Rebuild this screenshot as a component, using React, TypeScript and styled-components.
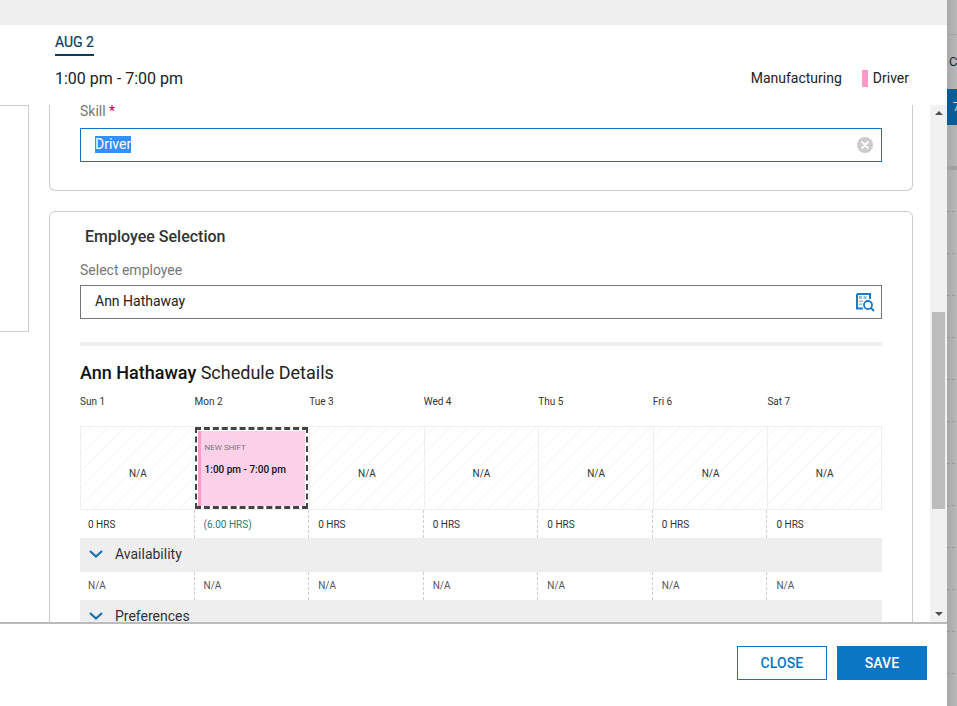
import React from "react";
import styled, { createGlobalStyle } from "styled-components";

const Global = createGlobalStyle`
  html, body { margin: 0; padding: 0; background: #fff; }
  body { font-family: Roboto, "Liberation Sans", sans-serif; }
`;

const Page = styled.div`
  width: 957px;
  height: 706px;
  display: flex;
  overflow: hidden;
`;
const Modal = styled.div`
  width: 947px;
  height: 706px;
  display: flex;
  flex-direction: column;
  background: #fff;
  flex: none;
`;
const TopBar = styled.div`
  height: 25px;
  background: #efefef;
  flex: none;
`;
const Header = styled.header`
  height: 80px;
  flex: none;
  padding: 9px 38px 0 55px;
  box-sizing: border-box;
`;
const DateTab = styled.div`
  display: table;
  font-size: 14px;
  line-height: 17px;
  font-weight: 400;
  color: #0d3c61;
  padding-bottom: 3px;
  border-bottom: 2px solid #0d3c61;
  -webkit-text-stroke: 0.2px #0d3c61;
`;
const TimeRow = styled.div`
  display: flex;
  align-items: center;
  justify-content: space-between;
  margin-top: 12px;
  height: 20px;
`;
const TimeText = styled.span`
  font-size: 16px;
  color: #222;
`;
const Legend = styled.div`
  display: flex;
  align-items: center;
  font-size: 14px;
  color: #222;
`;
const Swatch = styled.span`
  width: 6px;
  height: 17px;
  background: #ff99cc;
  margin: 0 5px 0 20px;
`;
const Body = styled.div`
  flex: 1;
  min-height: 0;
  display: flex;
  overflow: hidden;
`;
const SidePanel = styled.div`
  width: 29px;
  height: 227px;
  box-sizing: border-box;
  flex: none;
  border: 1px solid #ccc;
  border-left: none;
`;
const Main = styled.div`
  width: 864px;
  margin-left: 20px;
  margin-right: 17px;
  flex: none;
  display: flex;
  flex-direction: column;
  gap: 20px;
`;
const ClippedCard = styled.section`
  height: 86px;
  box-sizing: border-box;
  flex: none;
  border: 1px solid #ccc;
  border-top: none;
  border-radius: 0 0 6px 6px;
  padding: 0 30px;
`;
const Card = styled.section`
  flex: none;
  box-sizing: border-box;
  border: 1px solid #ccc;
  border-radius: 6px;
  padding: 15px 30px 0;
`;
const Label = styled.div`
  font-size: 14px;
  line-height: 16px;
  color: #777;
`;
const SkillLabel = styled(Label)`
  line-height: 12px;
  margin-bottom: 11px;
`;
const Required = styled.span`
  color: #c8004f;
`;
const Field = styled.div<{ $focus?: boolean }>`
  height: 34px;
  box-sizing: border-box;
  border: 1px solid ${(p) => (p.$focus ? "#0a76c4" : "#757575")};
  display: flex;
  align-items: center;
  justify-content: space-between;
  padding: 0 8px 0 14px;
  margin-top: 7px;
  font-size: 14px;
  color: #222;
`;
const FieldValue = styled.span`
  line-height: 17px;
  margin-bottom: 2px;
`;
const Selected = styled(FieldValue)`
  background: #3390ff;
  color: #fff;
`;
const SectionTitle = styled.h3`
  margin: 0 0 16px 5px;
  font-size: 16px;
  line-height: 19px;
  font-weight: 500;
  color: #333;
`;
const Divider = styled.div`
  height: 4px;
  background: #eee;
  margin-top: 23px;
`;
const ScheduleTitle = styled.h2`
  margin: 16px 0 0;
  font-size: 18px;
  line-height: 21px;
  font-weight: 400;
  color: #222;
  strong {
    font-weight: 500;
    color: #111;
  }
`;
const Week = styled.div`
  display: grid;
  grid-template-columns: repeat(7, 1fr);
  width: 802px;
`;
const DayNames = styled(Week)`
  margin-top: 13px;
  height: 30px;
`;
const DayName = styled.div`
  font-size: 10px;
  line-height: 12px;
  color: #333;
`;
const Slots = styled(Week)`
  height: 84px;
  box-sizing: border-box;
  border-top: 1px solid #eee;
  border-bottom: 1px solid #eee;
`;
const EmptySlot = styled.div`
  display: flex;
  align-items: center;
  justify-content: center;
  padding-top: 11px;
  font-size: 10px;
  color: #333;
  border-left: 1px solid #eee;
  background: repeating-linear-gradient(
    -45deg,
    #fff 0,
    #fff 11px,
    #f3f3f3 11px,
    #f3f3f3 12px
  );
  &:last-child {
    border-right: 1px solid #eee;
  }
`;
const ShiftSlot = styled.div`
  box-sizing: border-box;
  margin: 0 1px 0 0;
  border: 3px dashed #444;
  border-left-width: 2px;
  border-right-width: 2px;
  padding: 1px 1px 0 1px;
  background: #fff;
  display: flex;
`;
const ShiftFill = styled.div`
  flex: 1;
  background: #fbd0e9;
  border-left: 3px solid #ff99cc;
  padding: 12px 0 0 4px;
`;
const ShiftTag = styled.div`
  font-size: 8px;
  line-height: 10px;
  color: #777;
`;
const ShiftTime = styled.div`
  font-size: 10px;
  line-height: 12px;
  font-weight: 500;
  color: #111;
  margin-top: 11px;
`;
const InfoRow = styled(Week)<{ $h: number }>`
  height: ${(p) => p.$h}px;
`;
const InfoCell = styled.div<{ $accent?: boolean; $muted?: boolean }>`
  display: flex;
  align-items: center;
  padding-left: 9px;
  margin-left: -1px;
  padding-bottom: ${(p) => (p.$muted ? "2px" : "0")};
  font-size: 10px;
  color: ${(p) => (p.$accent ? "#2b7d6b" : p.$muted ? "#555" : "#333")};
  border-left: 1px dashed #ccc;
  &:first-child {
    border-left: none;
    margin-left: 0;
    padding-left: 8px;
  }
`;
const Band = styled.div`
  width: 802px;
  height: 34px;
  background: #eee;
  display: flex;
  align-items: center;
  padding-left: 9px;
  padding-bottom: 2px;
  box-sizing: border-box;
  font-size: 14px;
  color: #333;
  gap: 12px;
`;
const ScrollBar = styled.div`
  width: 17px;
  flex: none;
  background: #f1f1f1;
  display: flex;
  flex-direction: column;
  align-items: center;
  justify-content: space-between;
  position: relative;
`;
const Arrow = styled.div<{ $down?: boolean }>`
  width: 0;
  height: 0;
  margin: 6px 0;
  border-left: 4px solid transparent;
  border-right: 4px solid transparent;
  ${(p) =>
    p.$down ? "border-top: 4px solid #505050;" : "border-bottom: 4px solid #505050;"}
`;
const Thumb = styled.div`
  position: absolute;
  left: 2px;
  top: 207px;
  width: 13px;
  height: 197px;
  background: #bcbcbc;
`;
const Footer = styled.footer`
  height: 84px;
  flex: none;
  box-sizing: border-box;
  border-top: 2px solid #bbb;
  display: flex;
  justify-content: flex-end;
  gap: 10px;
  padding: 22px 20px 0 0;
`;
const Button = styled.button<{ $primary?: boolean }>`
  width: 90px;
  height: 34px;
  box-sizing: border-box;
  border: 1px solid #0a76c4;
  background: ${(p) => (p.$primary ? "#0a76c4" : "#fff")};
  color: ${(p) => (p.$primary ? "#fff" : "#0a76c4")};
  font-family: inherit;
  font-size: 14px;
  font-weight: 500;
  padding: 0;
  letter-spacing: 0.1px;
`;
const Strip = styled.aside`
  width: 10px;
  height: 706px;
  flex: none;
  background: linear-gradient(90deg, #a9a9a9, #b8b8b8);
  overflow: hidden;
  display: flex;
  flex-direction: column;
`;
const StripHead = styled.div`
  height: 35px;
  box-sizing: border-box;
  border-bottom: 1px solid #a4a4a4;
  flex: none;
`;
const StripCell = styled.div`
  height: 54px;
  flex: none;
  padding-left: 2px;
  font-size: 13px;
  line-height: 54px;
  color: #1a2a3a;
`;
const StripActive = styled.div`
  height: 36px;
  flex: none;
  background: #0a5c96;
  color: #cfe0ec;
  font-size: 12px;
  line-height: 36px;
  padding-left: 6px;
`;
const StripGap = styled.div`
  height: 45px;
  flex: none;
  box-sizing: border-box;
  border-bottom: 4px solid #a0a0a0;
`;
const TickRow = styled.div`
  height: 42px;
  flex: none;
  background: linear-gradient(
      90deg,
      #999 0 3px,
      transparent 3px 5px,
      #999 5px 8px,
      transparent 8px
    )
    0 41px / 100% 1px no-repeat;
`;

const ClearIcon = () => (
  <svg width="16" height="16" viewBox="0 0 16 16">
    <circle cx="8" cy="8" r="8" fill="#ccc" />
    <path d="M5 5l6 6M11 5l-6 6" stroke="#fff" strokeWidth="1.8" strokeLinecap="round" />
  </svg>
);

const LookupIcon = () => (
  <svg width="19" height="19" viewBox="0 0 19 19" style={{ marginRight: -2 }}>
    <path d="M1 1h13v5M1 1v14.5h6" fill="none" stroke="#1a7bc4" strokeWidth="2" />
    <rect x="3" y="3" width="3" height="3" fill="#8fc0e6" />
    <rect x="7.5" y="3" width="3" height="3" fill="#8fc0e6" />
    <rect x="3" y="7.5" width="4" height="1.5" fill="#8fc0e6" />
    <rect x="3" y="10.5" width="3" height="1.5" fill="#8fc0e6" />
    <circle cx="12" cy="12" r="4" fill="#fff" stroke="#1a7bc4" strokeWidth="1.8" />
    <path d="M15 15l3 3" stroke="#1a7bc4" strokeWidth="1.8" />
  </svg>
);

const Chevron = () => (
  <svg width="14" height="8" viewBox="0 0 14 8">
    <path d="M1 1l6 5.5L13 1" fill="none" stroke="#1a6fb0" strokeWidth="2.2" />
  </svg>
);

const days = ["Sun 1", "Mon 2", "Tue 3", "Wed 4", "Thu 5", "Fri 6", "Sat 7"];

export default function App() {
  return (
    <Page>
      <Global />
      <Modal>
        <TopBar />
        <Header>
          <DateTab>AUG 2</DateTab>
          <TimeRow>
            <TimeText>1:00 pm - 7:00 pm</TimeText>
            <Legend>
              Manufacturing
              <Swatch />
              Driver
            </Legend>
          </TimeRow>
        </Header>
        <Body>
          <SidePanel />
          <Main>
            <ClippedCard>
              <SkillLabel>
                Skill <Required>*</Required>
              </SkillLabel>
              <Field $focus>
                <Selected>Driver</Selected>
                <ClearIcon />
              </Field>
            </ClippedCard>
            <Card>
              <SectionTitle>Employee Selection</SectionTitle>
              <Label>Select employee</Label>
              <Field>
                <FieldValue>Ann Hathaway</FieldValue>
                <LookupIcon />
              </Field>
              <Divider />
              <ScheduleTitle>
                <strong>Ann Hathaway</strong> Schedule Details
              </ScheduleTitle>
              <DayNames>
                {days.map((d) => (
                  <DayName key={d}>{d}</DayName>
                ))}
              </DayNames>
              <Slots>
                {days.map((d, i) =>
                  i === 1 ? (
                    <ShiftSlot key={d}>
                      <ShiftFill>
                        <ShiftTag>NEW SHIFT</ShiftTag>
                        <ShiftTime>1:00 pm - 7:00 pm</ShiftTime>
                      </ShiftFill>
                    </ShiftSlot>
                  ) : (
                    <EmptySlot key={d}>N/A</EmptySlot>
                  )
                )}
              </Slots>
              <InfoRow $h={28}>
                {days.map((d, i) => (
                  <InfoCell key={d} $accent={i === 1}>
                    {i === 1 ? "(6.00 HRS)" : "0 HRS"}
                  </InfoCell>
                ))}
              </InfoRow>
              <Band>
                <Chevron />
                Availability
              </Band>
              <InfoRow $h={28}>
                {days.map((d) => (
                  <InfoCell key={d} $muted>
                    N/A
                  </InfoCell>
                ))}
              </InfoRow>
              <Band>
                <Chevron />
                Preferences
              </Band>
            </Card>
          </Main>
          <ScrollBar>
            <Arrow />
            <Thumb />
            <Arrow $down />
          </ScrollBar>
        </Body>
        <Footer>
          <Button>CLOSE</Button>
          <Button $primary>SAVE</Button>
        </Footer>
      </Modal>
      <Strip>
        <StripHead />
        <StripCell>C</StripCell>
        <StripActive>7</StripActive>
        <StripGap />
        {Array.from({ length: 13 }, (_, i) => (
          <TickRow key={i} />
        ))}
      </Strip>
    </Page>
  );
}
